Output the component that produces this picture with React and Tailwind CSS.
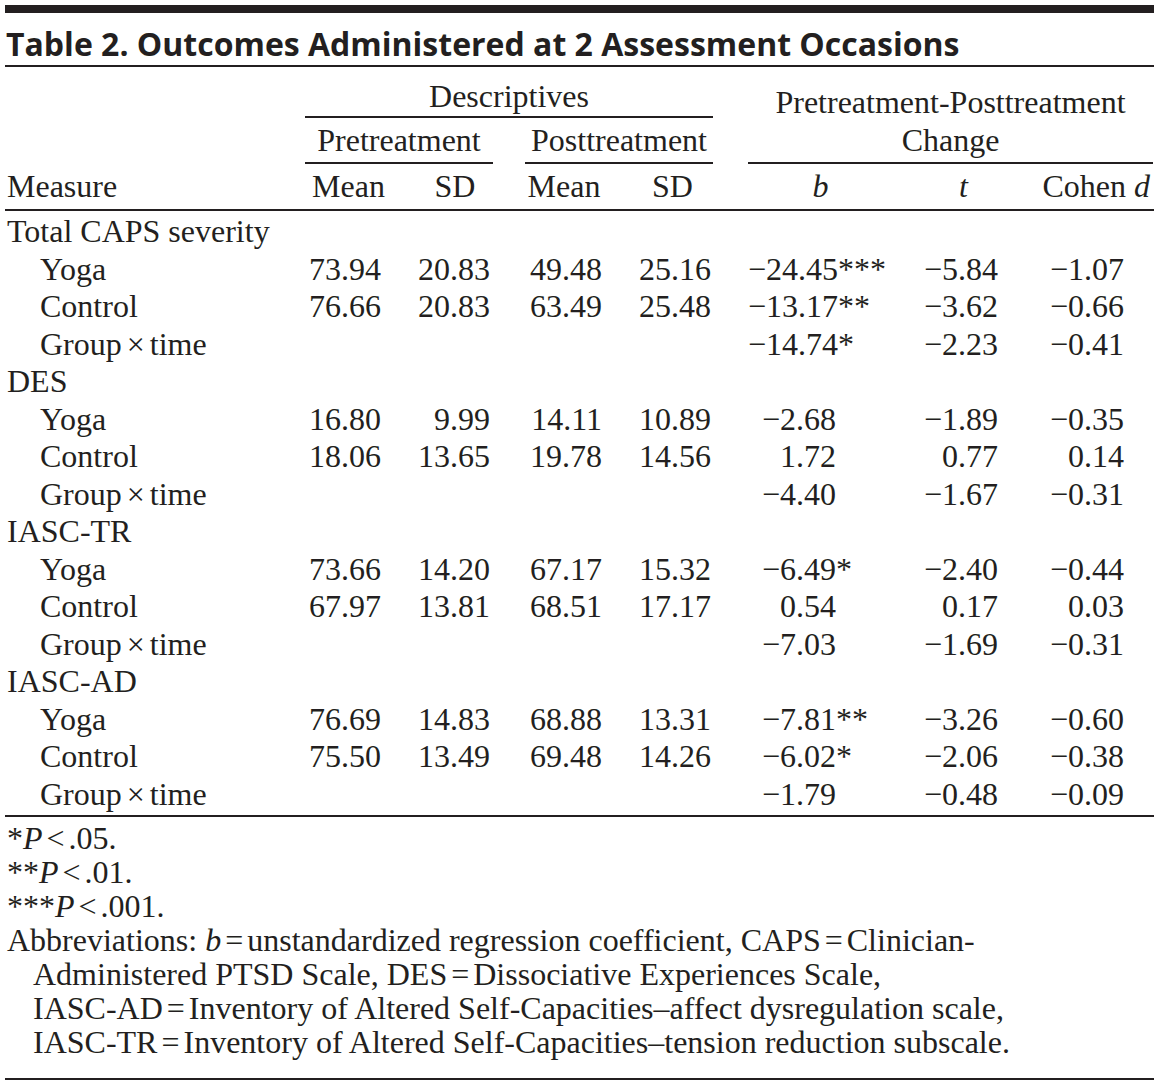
import React from 'react'

const serif = "font-['Liberation_Serif','Times_New_Roman',serif]"
const cols = 'grid grid-cols-[295px_95px_110px_110px_115px_175px_125px_123px]'
const M = '\u2212'

const data = [
  {
    group: 'Total CAPS severity',
    rows: [
      { label: 'Yoga', v: ['73.94', '20.83', '49.48', '25.16'], b: '−24.45', s: '***', t: `${M}5.84`, d: `${M}1.07` },
      { label: 'Control', v: ['76.66', '20.83', '63.49', '25.48'], b: '−13.17', s: '**', t: `${M}3.62`, d: `${M}0.66` },
      { label: 'gxt', b: '−14.74', s: '*', t: `${M}2.23`, d: `${M}0.41` },
    ],
  },
  {
    group: 'DES',
    rows: [
      { label: 'Yoga', v: ['16.80', '9.99', '14.11', '10.89'], b: '−2.68', t: `${M}1.89`, d: `${M}0.35` },
      { label: 'Control', v: ['18.06', '13.65', '19.78', '14.56'], b: '1.72', t: '0.77', d: '0.14' },
      { label: 'gxt', b: '−4.40', t: `${M}1.67`, d: `${M}0.31` },
    ],
  },
  {
    group: 'IASC-TR',
    rows: [
      { label: 'Yoga', v: ['73.66', '14.20', '67.17', '15.32'], b: '−6.49', s: '*', t: `${M}2.40`, d: `${M}0.44` },
      { label: 'Control', v: ['67.97', '13.81', '68.51', '17.17'], b: '0.54', t: '0.17', d: '0.03' },
      { label: 'gxt', b: '−7.03', t: `${M}1.69`, d: `${M}0.31` },
    ],
  },
  {
    group: 'IASC-AD',
    rows: [
      { label: 'Yoga', v: ['76.69', '14.83', '68.88', '13.31'], b: '−7.81', s: '**', t: `${M}3.26`, d: `${M}0.60` },
      { label: 'Control', v: ['75.50', '13.49', '69.48', '14.26'], b: '−6.02', s: '*', t: `${M}2.06`, d: `${M}0.38` },
      { label: 'gxt', b: '−1.79', t: `${M}0.48`, d: `${M}0.09` },
    ],
  },
]

// right padding per numeric column so the figures end where the print has them
const numPad = ['pr-[14px]', 'pr-[15px]', 'pr-[13px]', 'pr-[19px]']

// tight operator, the way the print sets it
function Op({ children, wide }) {
  return <span className={wide ? 'mx-[5px]' : 'mx-[4px]'}>{children}</span>
}

function Label({ text }) {
  if (text === 'gxt') return <>Group<Op wide>×</Op>time</>
  return text
}

// b column: two-digit values flush left, one-digit values nudged in, positives keep a blank sign slot
function BValue({ b, s }) {
  const neg = b.startsWith('−')
  const num = neg ? b.slice(1) : b
  const short = num.indexOf('.') === 1
  return (
    <span className={short ? 'ml-[14px]' : ''}>
      <span className={neg ? '' : 'invisible'}>{M}</span>
      {num}
      {s}
    </span>
  )
}

function DataRow({ r }) {
  const v = r.v || ['', '', '', '']
  return (
    <div className={`${cols} h-[37.5px] leading-[37.5px]`}>
      <div className="pl-[35px] whitespace-nowrap"><Label text={r.label} /></div>
      {v.map((x, i) => (
        <div key={i} className={`text-right ${numPad[i]}`}>{x}</div>
      ))}
      <div className="pl-[18px] whitespace-nowrap">
        <BValue b={r.b} s={r.s} />
      </div>
      <div className="text-right pr-[32px]">{r.t}</div>
      <div className="text-right pr-[29px]">{r.d}</div>
    </div>
  )
}

export default function App() {
  return (
    <div className="w-[1159px] min-h-[1091px] bg-white text-[#231f20] px-[5px] pt-[5px]">
      {/* heavy rule on top */}
      <div className="h-[8px] bg-[#231f20]" />

      {/* caption */}
      <div className="h-[54px] border-b-2 border-[#231f20] flex items-end pb-[1px]">
        <h1 className="pl-[1px] font-['Open_Sans',sans-serif] font-bold text-[32px] leading-[40px] whitespace-nowrap">
          Table 2. Outcomes Administered at 2 Assessment Occasions
        </h1>
      </div>

      <div className={`${serif} text-[32px]`}>
        {/* column heads, first two tiers */}
        <div className={`${cols} grid-rows-[51px_46px] leading-[37.5px]`}>
          <div className="row-span-2" />
          <div className="col-span-4 flex items-end">
            <div className="ml-[5px] mr-[17px] w-full text-center border-b-2 border-[#231f20] pb-[1px]">Descriptives</div>
          </div>
          <div className="col-span-3 row-span-2 flex items-end">
            <div className="ml-[18px] w-full text-center border-b-2 border-[#231f20] pb-[3px] leading-[38px]">
              <div>Pretreatment-Posttreatment</div>
              <div>Change</div>
            </div>
          </div>
          <div className="col-span-2 flex items-end">
            <div className="ml-[5px] mr-[12px] w-full text-center border-b-2 border-[#231f20] pb-[3px]">Pretreatment</div>
          </div>
          <div className="col-span-2 flex items-end">
            <div className="ml-[20px] mr-[17px] w-full text-center border-b-2 border-[#231f20] pb-[3px]">Posttreatment</div>
          </div>
        </div>
        <div className={`${cols} h-[47px] leading-[37.5px] items-end pb-[4px] border-b-2 border-[#231f20]`}>
          <div className="pl-[2px]">Measure</div>
          <div className="text-center pl-[2px]">Mean</div>
          <div className="text-center pl-[10px]">SD</div>
          <div className="text-center pl-[8px]">Mean</div>
          <div className="text-center">SD</div>
          <div className="text-center pl-[6px] italic">b</div>
          <div className="text-center italic pr-[8px]">t</div>
          <div className="text-right pr-[3px]">Cohen <span className="italic">d</span></div>
        </div>

        {/* body */}
        <div className="pt-[2px] pb-[2px] border-b-2 border-[#231f20]">
          {data.map((g) => (
            <React.Fragment key={g.group}>
              <div className="h-[37.5px] leading-[37.5px] pl-[2px]">{g.group}</div>
              {g.rows.map((r, i) => (
                <DataRow key={i} r={r} />
              ))}
            </React.Fragment>
          ))}
        </div>

        {/* notes */}
        <div className="pt-[4px] pb-[19px] leading-[34px] border-b-2 border-[#231f20] pl-[2px]">
          <p>*<span className="italic">P</span><Op>&lt;</Op>.05.</p>
          <p>**<span className="italic">P</span><Op>&lt;</Op>.01.</p>
          <p>***<span className="italic">P</span><Op>&lt;</Op>.001.</p>
          <p>
            Abbreviations: <span className="italic">b</span><Op>=</Op>unstandardized regression coefficient, CAPS<Op>=</Op>Clinician-
          </p>
          <div className="pl-[26px]">
            <p>Administered PTSD Scale, DES<Op>=</Op>Dissociative Experiences Scale,</p>
            <p>IASC-AD<Op>=</Op>Inventory of Altered Self-Capacities–affect dysregulation scale,</p>
            <p>IASC-TR<Op>=</Op>Inventory of Altered Self-Capacities–tension reduction subscale.</p>
          </div>
        </div>
      </div>
    </div>
  )
}
